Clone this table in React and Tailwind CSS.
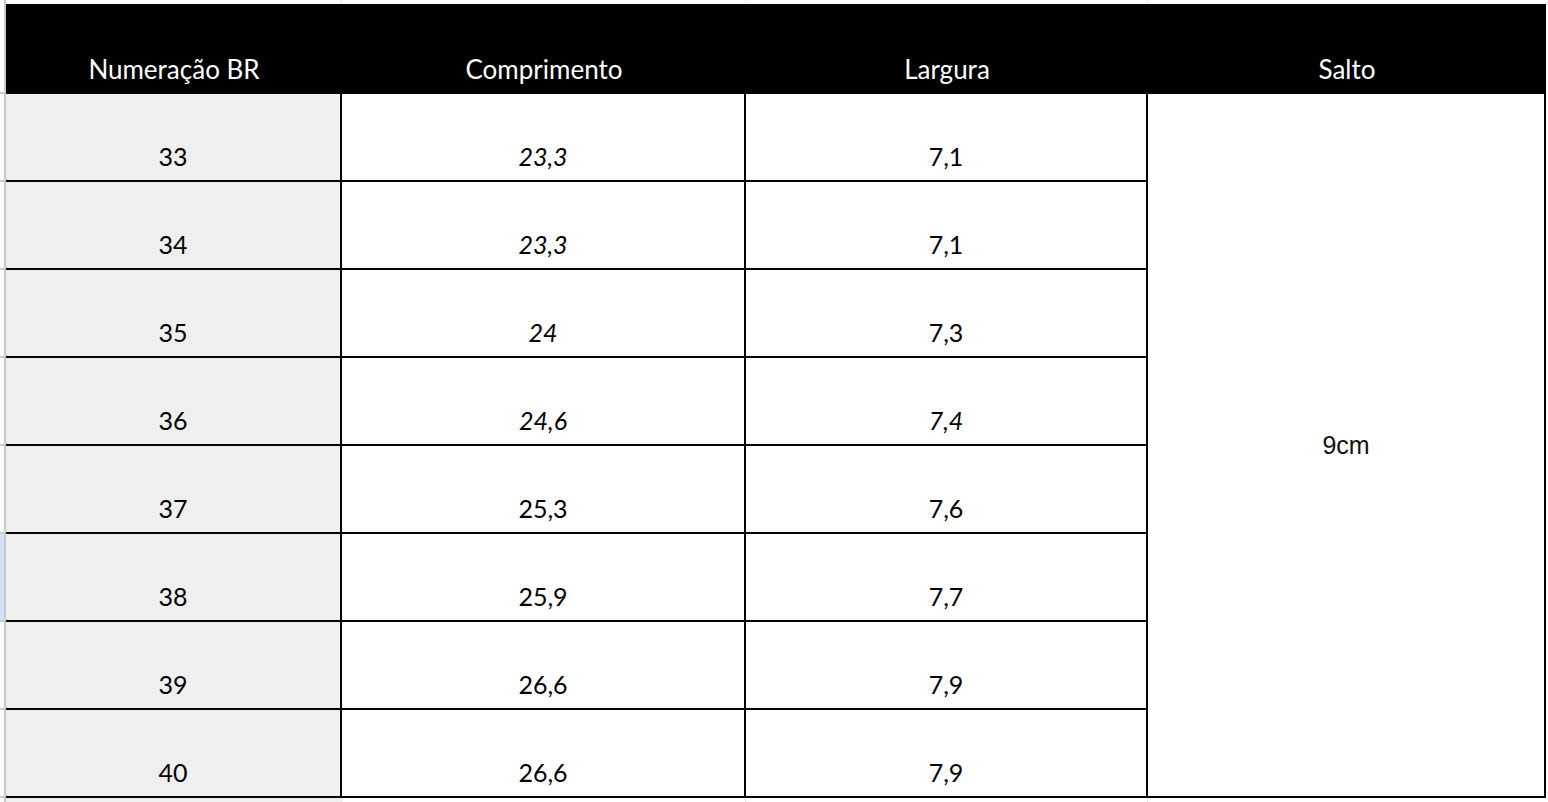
import React from "react";

const rows = [
  ["33", "23,3", true, "7,1", false],
  ["34", "23,3", true, "7,1", false],
  ["35", "24", true, "7,3", false],
  ["36", "24,6", true, "7,4", true],
  ["37", "25,3", false, "7,6", false],
  ["38", "25,9", false, "7,7", false],
  ["39", "26,6", false, "7,9", false],
  ["40", "26,6", false, "7,9", false],
];

const font = { fontFamily: "Lato, 'Open Sans', sans-serif" };

export default function App() {
  return (
    <div className="w-[1548px] h-[802px] bg-white overflow-hidden flex" style={font}>
      {/* row-header gutter */}
      <div className="w-[6px] flex flex-col">
        <div className="h-[4px] border-r-2 border-[#c9c9c9]" />
        <div className="h-[90px] border-r-2 border-b-2 border-[#c9c9c9]" />
        {rows.map((r, i) => (
          <div
            key={i}
            className={`h-[88px] border-r-2 border-b-2 border-[#c9c9c9] ${i === 5 ? "bg-[#d3e0fa]" : ""}`}
          />
        ))}
        <div className="h-[4px] border-r-2 border-[#c9c9c9]" />
      </div>

      <div className="w-[1540px] flex flex-col">
        {/* top strip */}
        <div className="h-[4px] flex">
          <div className="w-[336px] border-r border-[#e2e2e2]" />
          <div className="w-[404px] border-r border-[#e2e2e2]" />
          <div className="w-[402px] border-r border-[#e2e2e2]" />
          <div className="w-[398px]" />
        </div>

        {/* header */}
        <div className="h-[90px] bg-black flex text-white text-[26px] leading-[26px]">
          <div className="w-[336px] flex items-end justify-center pb-[12px]">Numeração BR</div>
          <div className="w-[404px] flex items-end justify-center pb-[12px]">Comprimento</div>
          <div className="w-[402px] flex items-end justify-center pb-[12px]">Largura</div>
          <div className="w-[398px] flex items-end justify-center pb-[12px]">Salto</div>
        </div>

        {/* body */}
        <div className="grid grid-cols-[336px_404px_402px_398px] grid-rows-[repeat(8,88px)] text-[25px] leading-[25px] text-black">
          <div
            className="col-start-4 row-start-1 row-span-8 border-r-2 border-b-2 border-black flex items-center justify-center text-[25px] text-[#111]"
            style={{ fontFamily: "'Liberation Sans', Arial, sans-serif" }}
          >
            9cm
          </div>
          {rows.map(([n, c, ci, l, li]) => (
            <React.Fragment key={n}>
              <div className="bg-[#efefef] border-r-2 border-b-2 border-black flex items-end justify-center pb-[11px]">
                {n}
              </div>
              <div className={`border-r-2 border-b-2 border-black flex items-end justify-center pb-[11px] ${ci ? "italic" : ""}`}>
                {c}
              </div>
              <div className={`border-r-2 border-b-2 border-black flex items-end justify-center pb-[11px] ${li ? "italic" : ""}`}>
                {l}
              </div>
            </React.Fragment>
          ))}
        </div>

        {/* bottom strip */}
        <div className="h-[4px] flex">
          <div className="w-[336px] bg-[#efefef] border-r border-[#e2e2e2]" />
          <div className="w-[404px] border-r border-[#e2e2e2]" />
          <div className="w-[402px] border-r border-[#e2e2e2]" />
          <div className="w-[398px]" />
        </div>
      </div>
    </div>
  );
}
